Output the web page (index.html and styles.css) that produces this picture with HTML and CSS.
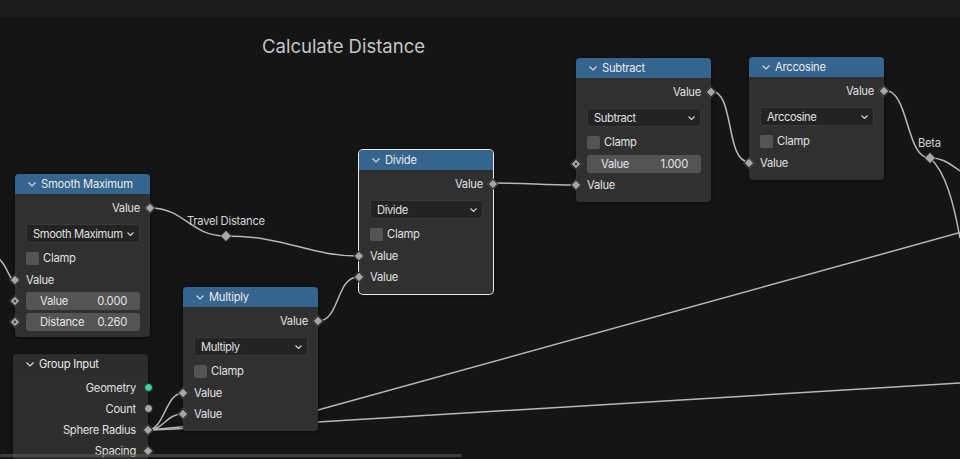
FILE: index.html
```html
<!DOCTYPE html>
<html>
<head>
<meta charset="utf-8">
<link rel="stylesheet" href="styles.css">
</head>
<body>
<div class="editor">
  <div class="topbar"></div>
  <div class="canvas">
    <svg class="wires" viewBox="0 17 960 442" width="960" height="442">
      <g fill="none" stroke="#b8b8b8" stroke-width="1.5">
        <path d="M-2,258 C8,265 8,280 15,280"/>
        <path d="M150,208 C185,208 190,236 226,236"/>
        <path d="M226,236 C285,236 310,256 358,256"/>
        <path d="M318,321 C340,321 336,277 358,277"/>
        <path d="M493,183 C530,183 540,185 576,185"/>
        <path d="M711,91 C735,91 725,162 749,162"/>
        <path d="M884,90 C910,90 905,158 930,158"/>
        <path d="M930,158 C945,158 950,165 962,172"/>
        <path d="M930,158 C946,172 954,205 960,238"/>
        <path d="M147,430 C165,430 165,393 183,393"/>
        <path d="M147,430 C165,430 165,414 183,414"/>
        <path d="M147,430 C180,428 220,423 318,410 L962,232"/>
        <path d="M147,430 C180,430 220,425 318,422 L962,383"/>
      </g>
      <g fill="#a8a8a8" stroke="#2a2a2a" stroke-width="0.8">
        <polygon points="226,230.5 231.5,236 226,241.5 220.5,236"/>
        <polygon points="930,152.5 935.5,158 930,163.5 924.5,158"/>
      </g>
    </svg>

    <div class="frame-label">Calculate Distance</div>
    <div class="reroute-label travel">Travel Distance</div>
    <div class="reroute-label beta">Beta</div>

    <!-- Smooth Maximum -->
    <div class="node smax">
      <div class="node-head"><svg class="chev" viewBox="0 0 8 5"><path d="M0.5,0.5 L4,4 L7.5,0.5"/></svg><span>Smooth Maximum</span></div>
      <div class="node-body">
        <div class="row out">Value<i class="sock r"></i></div>
        <div class="select"><span>Smooth Maximum</span><svg class="dchev" viewBox="0 0 7 4"><path d="M0.5,0.5 L3.5,3.5 L6.5,0.5"/></svg></div>
        <div class="row check"><span class="box"></span>Clamp</div>
        <div class="row in"><i class="sock l"></i>Value</div>
        <div class="row field-row"><i class="sock l dot"></i><div class="field"><span>Value</span><span>0.000</span></div></div>
        <div class="row field-row"><i class="sock l dot"></i><div class="field"><span>Distance</span><span>0.260</span></div></div>
      </div>
    </div>

    <!-- Group Input -->
    <div class="node ginput">
      <div class="node-head dark"><svg class="chev" viewBox="0 0 8 5"><path d="M0.5,0.5 L4,4 L7.5,0.5"/></svg><span>Group Input</span></div>
      <div class="node-body">
        <div class="row out g">Geometry<i class="sock r circ geo"></i></div>
        <div class="row out g">Count<i class="sock r circ"></i></div>
        <div class="row out g">Sphere Radius<i class="sock r"></i></div>
        <div class="row out g">Spacing<i class="sock r"></i></div>
      </div>
    </div>

    <!-- Multiply -->
    <div class="node mult">
      <div class="node-head"><svg class="chev" viewBox="0 0 8 5"><path d="M0.5,0.5 L4,4 L7.5,0.5"/></svg><span>Multiply</span></div>
      <div class="node-body">
        <div class="row out">Value<i class="sock r"></i></div>
        <div class="select"><span>Multiply</span><svg class="dchev" viewBox="0 0 7 4"><path d="M0.5,0.5 L3.5,3.5 L6.5,0.5"/></svg></div>
        <div class="row check"><span class="box"></span>Clamp</div>
        <div class="row in"><i class="sock l"></i>Value</div>
        <div class="row in"><i class="sock l"></i>Value</div>
      </div>
    </div>

    <!-- Divide -->
    <div class="node divide selected">
      <div class="node-head"><svg class="chev" viewBox="0 0 8 5"><path d="M0.5,0.5 L4,4 L7.5,0.5"/></svg><span>Divide</span></div>
      <div class="node-body">
        <div class="row out">Value<i class="sock r"></i></div>
        <div class="select"><span>Divide</span><svg class="dchev" viewBox="0 0 7 4"><path d="M0.5,0.5 L3.5,3.5 L6.5,0.5"/></svg></div>
        <div class="row check"><span class="box"></span>Clamp</div>
        <div class="row in"><i class="sock l"></i>Value</div>
        <div class="row in"><i class="sock l"></i>Value</div>
      </div>
    </div>

    <!-- Subtract -->
    <div class="node subtract">
      <div class="node-head"><svg class="chev" viewBox="0 0 8 5"><path d="M0.5,0.5 L4,4 L7.5,0.5"/></svg><span>Subtract</span></div>
      <div class="node-body">
        <div class="row out">Value<i class="sock r"></i></div>
        <div class="select"><span>Subtract</span><svg class="dchev" viewBox="0 0 7 4"><path d="M0.5,0.5 L3.5,3.5 L6.5,0.5"/></svg></div>
        <div class="row check"><span class="box"></span>Clamp</div>
        <div class="row field-row"><i class="sock l dot"></i><div class="field"><span>Value</span><span>1.000</span></div></div>
        <div class="row in"><i class="sock l"></i>Value</div>
      </div>
    </div>

    <!-- Arccosine -->
    <div class="node arccos">
      <div class="node-head"><svg class="chev" viewBox="0 0 8 5"><path d="M0.5,0.5 L4,4 L7.5,0.5"/></svg><span>Arccosine</span></div>
      <div class="node-body">
        <div class="row out">Value<i class="sock r"></i></div>
        <div class="select"><span>Arccosine</span><svg class="dchev" viewBox="0 0 7 4"><path d="M0.5,0.5 L3.5,3.5 L6.5,0.5"/></svg></div>
        <div class="row check"><span class="box"></span>Clamp</div>
        <div class="row in"><i class="sock l"></i>Value</div>
      </div>
    </div>

    <div class="hscroll"></div>
  </div>
</div>
</body>
</html>
```

FILE: styles.css
```css
* { box-sizing: border-box; }
html, body { margin: 0; padding: 0; background: #151515; }
body {
  font-family: Inter, "Noto Sans", "Liberation Sans", sans-serif;
  font-size: 11.2px;
  letter-spacing: -0.25px;
  color: #e0e0e0;
}
.editor {
  width: 960px;
  height: 459px;
  overflow: hidden;
  background: #151515;
}
.topbar {
  height: 17px;
  background: #1d1d1d;
}
.canvas {
  position: relative;
  height: 442px;
}
.wires {
  position: absolute;
  left: 0;
  top: 0;
}
.frame-label {
  position: absolute;
  left: 262px;
  top: 18px;
  font-size: 18.5px;
  letter-spacing: 0;
  line-height: 22px;
  color: #c6c6c6;
}
.reroute-label {
  position: absolute;
  line-height: 14px;
  color: #d4d4d4;
}
.reroute-label.travel { left: 187px; top: 197px; }
.reroute-label.beta { left: 918px; top: 119px; }

.node {
  position: absolute;
  width: 135px;
  background: #303030;
  border-radius: 4px;
  box-shadow: 0 1px 5px rgba(0, 0, 0, 0.55);
  padding-bottom: 7px;
}
.node.smax { left: 15px; top: 157px; padding-bottom: 5px; }
.node.ginput { left: 13px; top: 337px; background: #2e2e2e; }
.node.mult { left: 183px; top: 270px; }
.node.divide { left: 359px; top: 133px; width: 134px; }
.node.subtract { left: 576px; top: 41px; }
.node.arccos { left: 749px; top: 40px; }
.node.selected { box-shadow: 0 0 0 1px #ececec, 0 1px 5px rgba(0, 0, 0, 0.55); }

.node-head {
  height: 20px;
  background: #35648e;
  border-radius: 4px 4px 0 0;
  display: flex;
  align-items: center;
  padding-left: 13px;
  gap: 5px;
  color: #eaeaea;
}
.node-head.dark { background: #2c2c2c; }
.chev {
  width: 8px;
  height: 5px;
  fill: none;
  stroke: #d8d8d8;
  stroke-width: 1.2;
  flex: none;
}
.node-body { padding-top: 3px; }

.row {
  position: relative;
  height: 21px;
  display: flex;
  align-items: center;
  padding: 0 10px 0 11px;
}
.row.out { justify-content: flex-end; }
.row.out.g { padding-right: 12px; }
.row.check { height: 22px; gap: 4px; }
.box {
  width: 13px;
  height: 13px;
  border-radius: 2px;
  background: #545454;
  flex: none;
}

.select {
  margin: 6px 10px 4px 11px;
  height: 19px;
  background: #232323;
  border: 1px solid #393939;
  border-radius: 3px;
  display: flex;
  align-items: center;
  justify-content: space-between;
  padding: 0 5px 0 6px;
  color: #e0e0e0;
  white-space: nowrap;
  letter-spacing: -0.4px;
}
.dchev {
  width: 7px;
  height: 4px;
  fill: none;
  stroke: #cfcfcf;
  stroke-width: 1.2;
  flex: none;
}

.field {
  flex: 1;
  height: 18px;
  background: #545454;
  border-radius: 3px;
  display: flex;
  align-items: center;
  justify-content: space-between;
  padding: 0 13px 0 14px;
  color: #e4e4e4;
}

.sock {
  position: absolute;
  top: 50%;
  width: 8px;
  height: 8px;
  margin-top: -4px;
  background: #a6a6a6;
  border: 1px solid #262626;
  transform: rotate(45deg);
}
.sock.l { left: -4px; }
.sock.r { right: -4px; }
.sock.dot::after {
  content: "";
  position: absolute;
  left: 2px;
  top: 2px;
  width: 2px;
  height: 2px;
  background: #2a2a2a;
}
.sock.circ {
  width: 9px;
  height: 9px;
  margin-top: -4.5px;
  right: -4.5px;
  border-radius: 50%;
  transform: none;
}
.sock.geo { background: #3fd2a0; }

.hscroll {
  position: absolute;
  left: 0;
  top: 437px;
  width: 462px;
  height: 3px;
  background: rgba(95, 95, 95, 0.55);
  border-radius: 2px;
}
```
